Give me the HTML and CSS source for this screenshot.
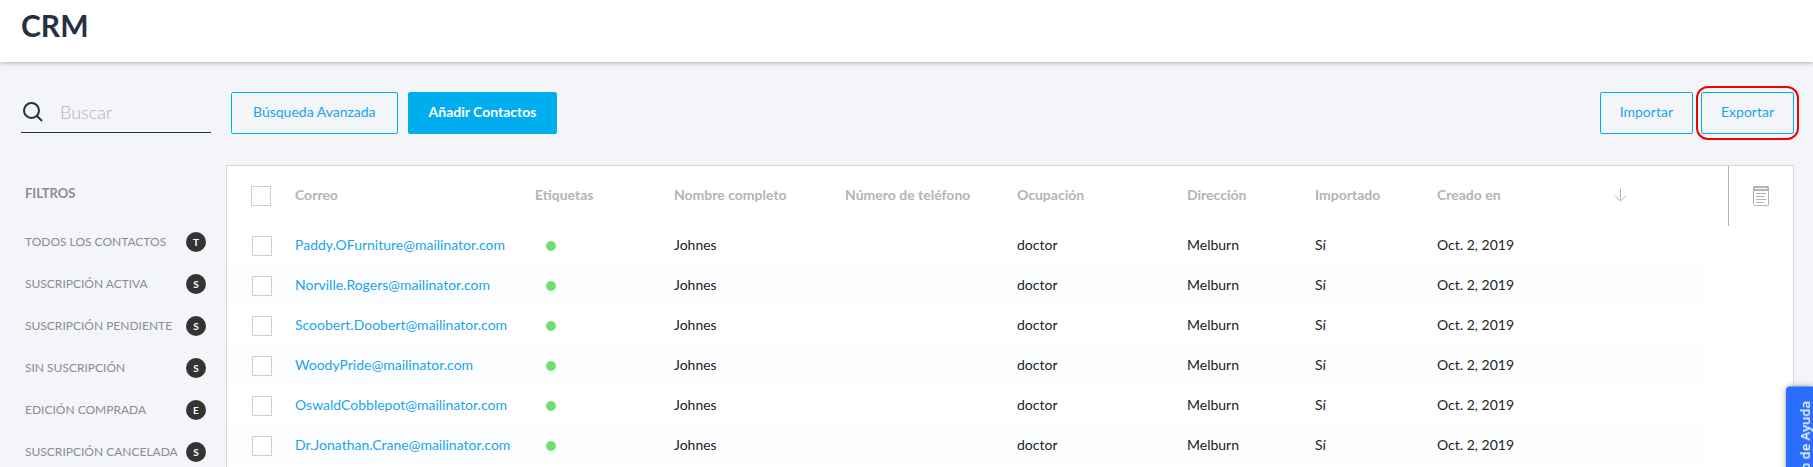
FILE: index.html
```html
<!DOCTYPE html>
<html lang="es">
<head>
<meta charset="utf-8">
<title>CRM</title>
<link rel="stylesheet" href="styles.css">
</head>
<body>
<header class="page-header"><h1>CRM</h1></header>

<div class="toolbar">
  <label class="search">
    <svg class="search-icon" viewBox="0 0 20 20" aria-hidden="true"><circle cx="8.5" cy="8.5" r="7.5"/><path d="M13.5 13.5 19 19"/></svg>
    <input type="search" placeholder="Buscar" aria-label="Buscar">
  </label>
  <button class="btn btn-wide" type="button">Búsqueda Avanzada</button>
  <button class="btn btn-primary" type="button">Añadir Contactos</button>
  <div class="transfer">
    <button class="btn" type="button">Importar</button>
    <button class="btn btn-marked" type="button">Exportar</button>
  </div>
</div>

<div class="content">
  <nav class="filters" aria-labelledby="filters-title">
    <h2 id="filters-title">FILTROS</h2>
    <ul>
      <li><a href="#">TODOS LOS CONTACTOS <span class="badge">T</span></a></li>
      <li><a href="#">SUSCRIPCIÓN ACTIVA <span class="badge">S</span></a></li>
      <li><a href="#">SUSCRIPCIÓN PENDIENTE <span class="badge">S</span></a></li>
      <li><a href="#">SIN SUSCRIPCIÓN <span class="badge">S</span></a></li>
      <li><a href="#">EDICIÓN COMPRADA <span class="badge">E</span></a></li>
      <li><a href="#">SUSCRIPCIÓN CANCELADA <span class="badge">S</span></a></li>
    </ul>
  </nav>

  <main class="panel">
    <table class="contacts">
      <colgroup>
        <col class="c-check"><col class="c-mail"><col class="c-tag"><col class="c-name"><col class="c-phone"><col class="c-job"><col class="c-city"><col class="c-imported"><col class="c-date"><col>
      </colgroup>
      <thead>
        <tr>
          <th><input type="checkbox" aria-label="Seleccionar todos"></th>
          <th>Correo</th><th>Etiquetas</th><th>Nombre completo</th><th>Número de teléfono</th><th>Ocupación</th><th>Dirección</th><th>Importado</th><th>Creado en</th>
          <th><button class="icon-btn" type="button" aria-label="Ordenar"><svg class="sort-icon" viewBox="0 0 13 13" aria-hidden="true"><path d="M6.5 0v12M1 6.5l5.500 5.500 5.500-5.500"/></svg></button></th>
        </tr>
      </thead>
      <tbody>
        <tr><td><input type="checkbox" aria-label="Seleccionar Paddy"></td><td><a href="#">Paddy.OFurniture@mailinator.com</a></td><td><span class="dot"></span></td><td>Johnes</td><td></td><td>doctor</td><td>Melburn</td><td>Sí</td><td>Oct. 2, 2019</td><td></td></tr>
        <tr><td><input type="checkbox" aria-label="Seleccionar Norville"></td><td><a href="#">Norville.Rogers@mailinator.com</a></td><td><span class="dot"></span></td><td>Johnes</td><td></td><td>doctor</td><td>Melburn</td><td>Sí</td><td>Oct. 2, 2019</td><td></td></tr>
        <tr><td><input type="checkbox" aria-label="Seleccionar Scoobert"></td><td><a href="#">Scoobert.Doobert@mailinator.com</a></td><td><span class="dot"></span></td><td>Johnes</td><td></td><td>doctor</td><td>Melburn</td><td>Sí</td><td>Oct. 2, 2019</td><td></td></tr>
        <tr><td><input type="checkbox" aria-label="Seleccionar Woody"></td><td><a href="#">WoodyPride@mailinator.com</a></td><td><span class="dot"></span></td><td>Johnes</td><td></td><td>doctor</td><td>Melburn</td><td>Sí</td><td>Oct. 2, 2019</td><td></td></tr>
        <tr><td><input type="checkbox" aria-label="Seleccionar Oswald"></td><td><a href="#">OswaldCobblepot@mailinator.com</a></td><td><span class="dot"></span></td><td>Johnes</td><td></td><td>doctor</td><td>Melburn</td><td>Sí</td><td>Oct. 2, 2019</td><td></td></tr>
        <tr><td><input type="checkbox" aria-label="Seleccionar Jonathan"></td><td><a href="#">Dr.Jonathan.Crane@mailinator.com</a></td><td><span class="dot"></span></td><td>Johnes</td><td></td><td>doctor</td><td>Melburn</td><td>Sí</td><td>Oct. 2, 2019</td><td></td></tr>
      </tbody>
    </table>
    <div class="panel-tools">
      <button class="icon-btn" type="button" aria-label="Columnas"><svg class="list-icon" viewBox="0 0 16 20" aria-hidden="true"><path class="fill" d="M1 0h14a1 1 0 0 1 1 1v4H0V1a1 1 0 0 1 1-1z"/><path class="slot" d="M2 2.500h12"/><path d="M.5 4v14.500a1 1 0 0 0 1 1h13a1 1 0 0 0 1-1V4M3 7.500h10M3 10.500h8M3 13.500h10M3 16.500h8"/></svg></button>
    </div>
  </main>
</div>

<button class="help-tab" type="button">Centro de Ayuda</button>
</body>
</html>
```
FILE: styles.css
```css
* { box-sizing: border-box; }

body {
  margin: 0;
  height: 100vh;
  overflow: hidden;
  display: flex;
  flex-direction: column;
  background: #f3f5f9;
  color: #222;
  font: 14px/20px Lato, "Open Sans", sans-serif;
}

button, input { font: inherit; }
a { text-decoration: none; }

.page-header {
  flex: none;
  height: 62px;
  padding: 5px 21px;
  background: #fff;
  box-shadow: 0 1px 4px rgba(40, 45, 60, .35);
}

h1 {
  margin: 0;
  color: #272f43;
  font-size: 30px;
  line-height: 40px;
  font-weight: 700;
}

.toolbar {
  flex: none;
  display: flex;
  padding: 30px 19px 31px 21px;
}

.search {
  display: flex;
  align-items: center;
  gap: 17px;
  width: 190px;
  height: 41px;
  margin-right: 20px;
  padding-left: 2px;
  border-bottom: 1px solid #272f43;
}

.search-icon {
  flex: none;
  width: 20px;
  height: 20px;
  fill: none;
  stroke: #272f43;
  stroke-width: 2;
}

.search input {
  width: 100%;
  min-width: 0;
  padding: 0;
  border: 0;
  outline: 0;
  background: none;
  font-size: 18px;
  font-weight: 300;
}

.search input::placeholder { color: #b4b4b4; }

.btn {
  height: 42px;
  margin-right: 10px;
  padding: 0 20px 2px;
  border: 1px solid #00aeef;
  border-radius: 2px;
  background: transparent;
  color: #1ba4ec;
}

.btn-wide {
  padding-right: 21px;
  padding-left: 21px;
}

.btn-primary {
  background: #00aeef;
  color: #fff;
  font-weight: 700;
}

.transfer {
  display: flex;
  gap: 8px;
  margin-left: auto;
}

.transfer .btn {
  margin: 0;
  padding-right: 19px;
  padding-left: 19px;
}

.btn-marked {
  position: relative;
}

.btn-marked::after {
  content: "";
  position: absolute;
  inset: -7px -6px;
  border: 2px solid #f40000;
  border-radius: 12px;
}

.content {
  flex: 1;
  display: flex;
}

.filters {
  flex: none;
  width: 226px;
  padding: 18px 20px 0 25px;
}

.filters h2 {
  margin: 0 0 18px;
  color: #8c8d91;
  font-size: 13px;
  line-height: 20px;
  font-weight: 700;
}

.filters ul {
  margin: 0;
  padding: 0;
  list-style: none;
}

.filters a {
  display: flex;
  align-items: center;
  justify-content: space-between;
  height: 42px;
  color: #8c8d91;
  font-size: 12px;
  white-space: nowrap;
}

.badge {
  flex: none;
  width: 20px;
  border-radius: 50%;
  background: #333;
  color: #fff;
  font-size: 10px;
  line-height: 20px;
  font-weight: 700;
  text-align: center;
}

.panel {
  flex: 1;
  min-width: 0;
  display: flex;
  align-items: flex-start;
  gap: 21px;
  margin-right: 19px;
  border: 1px solid #d6d7da;
  border-bottom: 0;
  background: #fff;
}

.contacts {
  flex: 1;
  min-width: 0;
  table-layout: fixed;
  border-collapse: collapse;
}

.c-check { width: 68px; }
.c-mail { width: 240px; }
.c-tag { width: 139px; }
.c-name { width: 171px; }
.c-phone { width: 172px; }
.c-job { width: 170px; }
.c-city { width: 128px; }
.c-imported { width: 122px; }
.c-date { width: 177px; }

th, td {
  padding: 0 0 2px;
  text-align: left;
  white-space: nowrap;
}

th {
  height: 60px;
  color: #b4b4b4;
  font-weight: 700;
}

td { height: 40px; }
td a { color: #1ba4ec; }
tbody tr:nth-child(even) { background: #fbfdff; }
th:first-child { padding: 0 0 0 24px; }
td:first-child { padding: 0 0 0 25px; }
td:nth-child(3) { padding: 0; }

input[type="checkbox"] {
  appearance: none;
  display: block;
  width: 20px;
  height: 20px;
  margin: 0;
  border: 1px solid #d0d0d2;
  background: #fff;
}

.dot {
  display: block;
  width: 10px;
  height: 10px;
  margin-left: 11px;
  border-radius: 50%;
  background: #6fe070;
}

.icon-btn {
  display: block;
  padding: 0;
  border: 0;
  background: none;
}

.icon-btn svg {
  display: block;
  fill: none;
  stroke: #b4b4b4;
}

.sort-icon { width: 13px; height: 13px; }
.list-icon { width: 16px; height: 20px; }
.icon-btn .fill { fill: #b4b4b4; stroke: none; }
.icon-btn .slot { stroke: #fff; }

.panel-tools {
  flex: none;
  display: flex;
  align-items: center;
  justify-content: center;
  width: 65px;
  height: 60px;
  border-left: 1px solid #b4b4b4;
}

/* Sideways tab, read from bottom to top */
.help-tab {
  position: fixed;
  top: 386px;
  right: 0;
  width: 27px;
  padding: 15px 11px 15px 0;
  border: 0;
  border-radius: 0 4px 4px 0;
  background: #2a6dff;
  box-shadow: 0 0 6px rgba(0, 0, 0, .35);
  color: #fff;
  font: 600 13px/16px "Open Sans", sans-serif;
  white-space: nowrap;
  writing-mode: vertical-rl;
  transform: rotate(180deg);
}
```
